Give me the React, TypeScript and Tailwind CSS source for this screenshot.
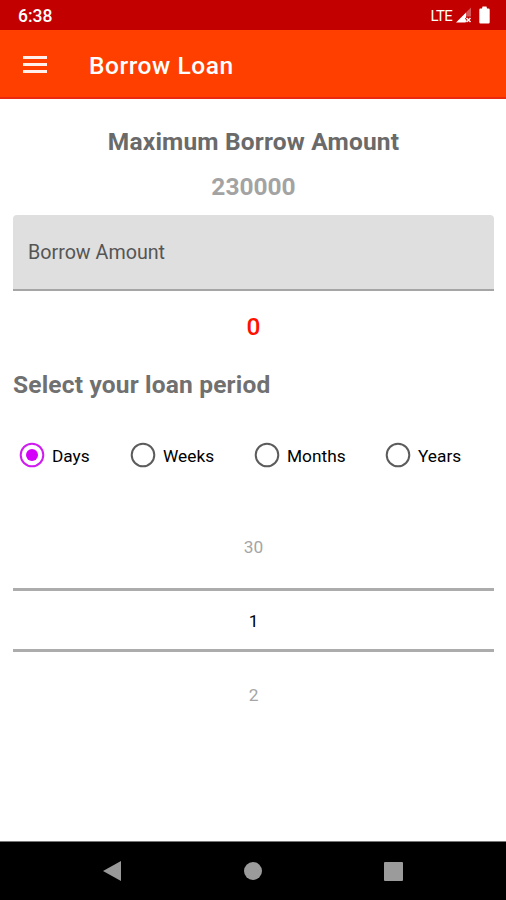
import React from "react";

function StatusBar() {
  return (
    <div className="flex h-[30px] shrink-0 items-center justify-between bg-[#c30000] pr-[16px] pl-[18px] text-white">
      <span className="mt-[2px] text-[17.5px] leading-5 font-medium">6:38</span>
      <div className="flex items-center">
        <span className="mt-[2px] text-[15px] leading-5 tracking-[-0.7px]">LTE</span>
        <svg className="ml-[4px]" width="16" height="16" viewBox="0 0 16 16">
          <path d="M0 15.500 10 5.500v5l-1 1 1.500 2-1 2z" fill="#fff" />
          <path d="M10 5.500 15 .5v9h-5z" fill="#fff" opacity=".35" />
          <path d="m10.500 11 4 4m0-4-4 4" stroke="#fff" strokeWidth="1.5" />
        </svg>
        <svg className="ml-[7px]" width="11" height="18" viewBox="0 0 11 18">
          <path d="M3.500.5h4l.5 2h1.500q1.200 0 1.200 1.200v12.600q0 1.200-1.200 1.200H1.500Q.3 17.500.3 16.300V3.700Q.3 2.500 1.500 2.500H3z" fill="#fff" />
        </svg>
      </div>
    </div>
  );
}

function AppBar() {
  return (
    <header className="flex h-[69px] shrink-0 items-center border-b-2 border-[#ea2a10] bg-[#ff3f00] pl-[23px] text-white">
      <button aria-label="Menu" className="mt-[2px] flex w-[24px] flex-col gap-[4px]">
        <span className="h-[3px] w-full bg-[#fff0ec]" />
        <span className="h-[3px] w-full bg-[#fff0ec]" />
        <span className="h-[3px] w-full bg-[#fff0ec]" />
      </button>
      <h1 className="mt-[4px] ml-[42px] text-[24.5px] leading-8 font-medium tracking-[0.55px]">Borrow Loan</h1>
    </header>
  );
}

function Radio({ label, checked = false, className }: { label: string; checked?: boolean; className: string }) {
  return (
    <label className={`flex items-center ${className}`}>
      <svg width="26" height="26" viewBox="0 0 26 26" fill="none">
        <circle cx="13" cy="13" r="11.3" stroke={checked ? "#cf1cf0" : "#5c5c5c"} strokeWidth="2" />
        {checked && <circle cx="13" cy="13" r="6" fill="#d500f9" />}
      </svg>
      <span className="mt-px ml-[7px] text-[17.3px] leading-6">{label}</span>
    </label>
  );
}

export default function App() {
  return (
    <div className="flex h-[900px] w-[506px] flex-col overflow-hidden bg-white font-[Roboto,sans-serif] text-black">
      <StatusBar />
      <AppBar />
      <main className="flex flex-1 flex-col pr-[12px] pl-[13px] text-center">
        <h2 className="mt-[27px] text-[24.5px] leading-8 font-bold tracking-[0.18px] text-[#6a6a6a]">Maximum Borrow Amount</h2>
        <p className="mt-[13px] text-[24.5px] leading-8 font-bold text-[#a3a3a3]">230000</p>
        <div className="mt-[12px] flex h-[76px] items-center rounded-t-[4px] border-b-2 border-[#a5a5a5] bg-[#dfdfdf] pt-[2px] pl-[15px] text-[19.7px] text-[#555]">
          Borrow Amount
        </div>
        <p className="mt-[20px] text-[24.5px] leading-8 font-medium text-[#ff1100]">0</p>
        <h2 className="mt-[26px] text-left text-[24.5px] leading-8 font-bold tracking-[0.18px] text-[#707070]">Select your loan period</h2>
        <div className="mt-[41px] flex h-[26px] pl-[6px]">
          <Radio label="Days" checked className="w-[111px]" />
          <Radio label="Weeks" className="w-[124px]" />
          <Radio label="Months" className="w-[131px]" />
          <Radio label="Years" className="" />
        </div>
        <div className="mt-[67px] flex flex-col text-[17.3px] leading-6">
          <span className="h-[53px] text-[#a5a5a5]">30</span>
          <div className="flex h-[64px] items-center justify-center border-y-[3px] border-[#acacac]">
            <span className="mt-[2px]">1</span>
          </div>
          <span className="mt-[31px] text-[#a5a5a5]">2</span>
        </div>
      </main>
      <nav className="flex h-[59px] shrink-0 items-center border-t border-[#777] bg-black pl-[102px]">
        <svg width="20" height="22" viewBox="0 0 20 22">
          <path d="M1 11 19 1v20z" fill="#999" />
        </svg>
        <span className="ml-[122px] size-[18px] rounded-full bg-[#9b9b9b]" />
        <span className="ml-[122px] size-[19px] rounded-[1px] bg-[#9b9b9b]" />
      </nav>
    </div>
  );
}
